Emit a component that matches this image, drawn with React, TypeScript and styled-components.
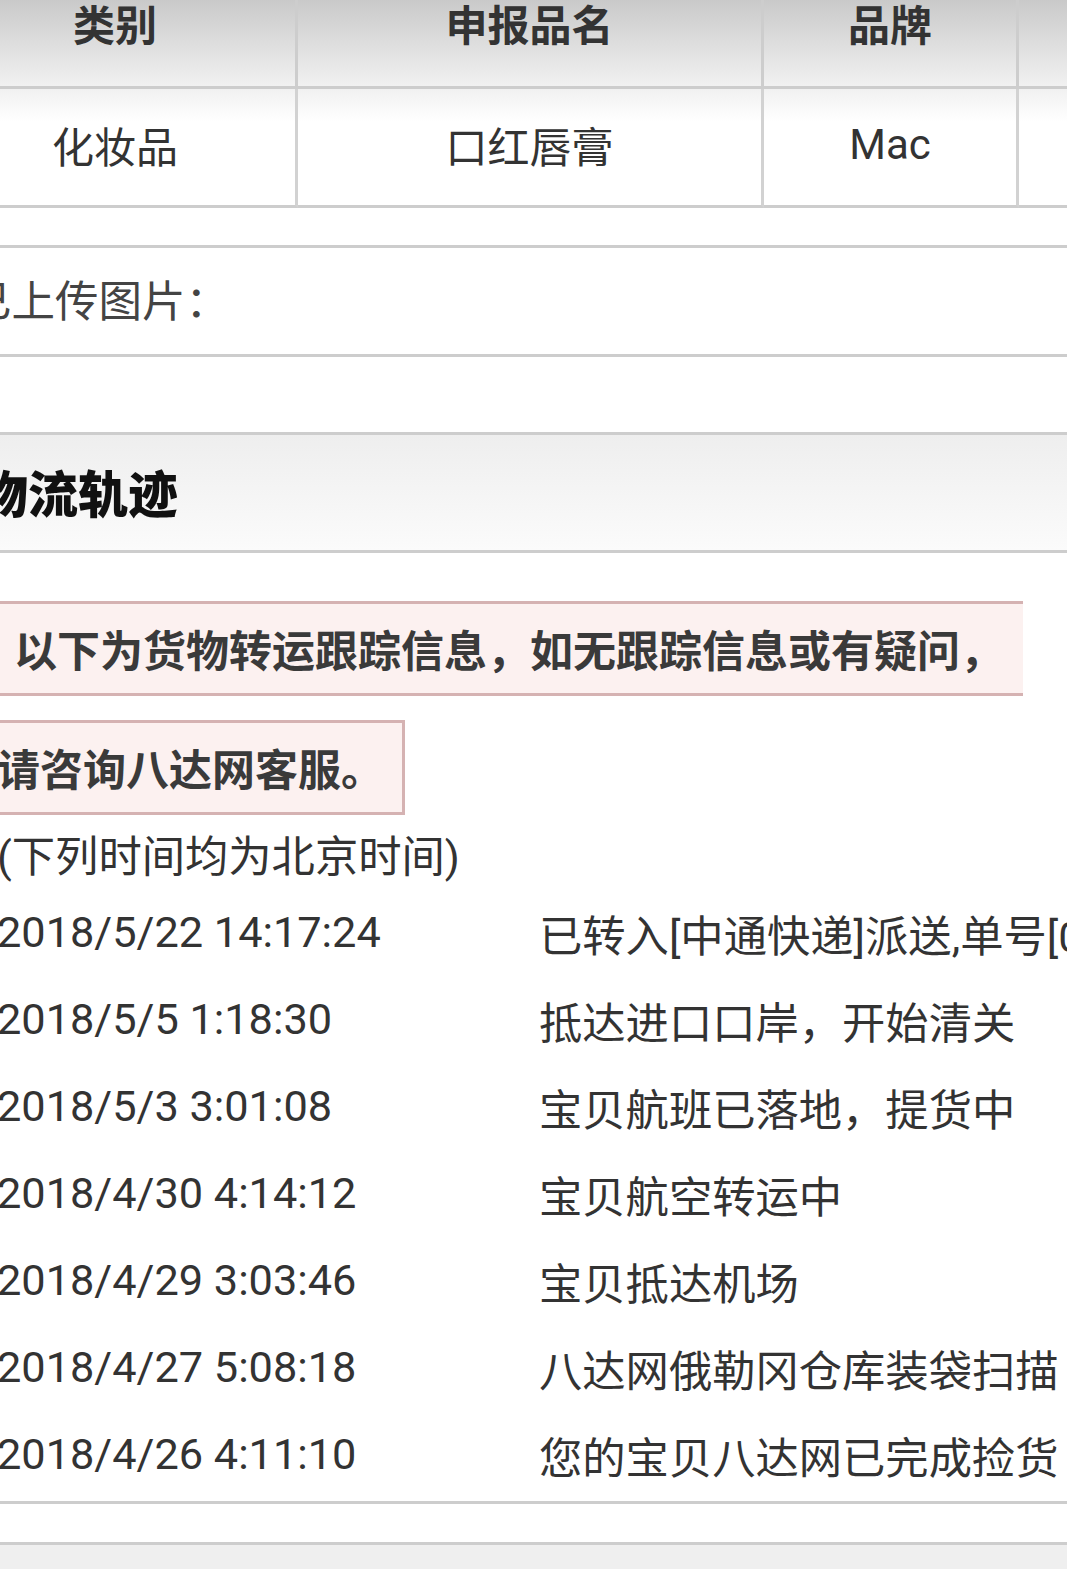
import React from "react";
import styled, { createGlobalStyle } from "styled-components";

const Global = createGlobalStyle`
  html, body { margin: 0; padding: 0; background: #fff; }
  body {
    overflow-x: hidden;
    font-family: Roboto, "Noto Sans CJK SC", sans-serif;
    color: #333;
  }
`;

const Page = styled.div`
  width: 1067px;
  overflow: hidden;
`;

const Canvas = styled.div`
  width: 1260px;
  margin-left: -65px;
  margin-top: -36px;
`;

const Table = styled.div`
  display: grid;
  grid-template-columns: 363px 466px 255px 1fr;
`;

const HeadCell = styled.div`
  height: 125px;
  box-sizing: border-box;
  padding-bottom: 5px;
  display: flex;
  align-items: center;
  justify-content: center;
  border-right: 3px solid #cdcdcd;
  border-bottom: 3px solid #cdcdcd;
  background: linear-gradient(#b9b9b9, #f1f1f1);
  font-family: "Noto Sans CJK SC", sans-serif;
  font-weight: 700;
  font-size: 42px;
  color: #333;
`;

const Cell = styled.div`
  height: 119px;
  box-sizing: border-box;
  padding-bottom: 5px;
  display: flex;
  align-items: center;
  justify-content: center;
  border-right: 3px solid #d2d2d2;
  border-bottom: 3px solid #cdcdcd;
  background: linear-gradient(#f1f1f1, #ffffff 28%);
  font-size: 42px;
  color: #333;
`;

const Panel = styled.div`
  margin-top: 37px;
  border-top: 3px solid #cdcdcd;
`;

const InfoRow = styled.div<{ $h: number }>`
  height: ${(p) => p.$h}px;
  box-sizing: border-box;
  padding: 0 0 5px 33px;
  display: flex;
  align-items: center;
  border-bottom: 3px solid #cdcdcd;
  font-family: "Noto Sans CJK SC", sans-serif;
  font-size: 43.5px;
  color: #444;
`;

const SectionTitle = styled.div`
  height: 118px;
  box-sizing: border-box;
  padding: 0 0 3px 43px;
  display: flex;
  align-items: center;
  border-bottom: 3px solid #cdcdcd;
  background: linear-gradient(#eeeeee, #fbfbfb);
  font-family: "Noto Sans CJK SC", sans-serif;
  font-weight: 900;
  font-size: 50px;
  color: #111;
`;

const Tracking = styled.div`
  padding: 36px 0 3px 62px;
  border-bottom: 3px solid #cdcdcd;
`;

const NoticePara = styled.div`
  line-height: 119px;
  font-family: "Noto Sans CJK SC", sans-serif;
  font-weight: 700;
  font-size: 43px;
  color: #3a3a3a;
`;

const Notice = styled.span`
  background: #fcf1f0;
  border: 3px solid #d5b2b2;
  padding: 13px 18px 14px 14px;
`;

const Note = styled.div`
  line-height: 62px;
  font-size: 43.3px;
  color: #333;
`;

const TrackRow = styled.div`
  display: grid;
  grid-template-columns: 542px 1fr;
  height: 87px;
  align-items: center;
  font-size: 43.3px;
  color: #333;
  white-space: nowrap;
`;

const Spacer = styled.div`
  height: 38px;
  border-bottom: 3px solid #cdcdcd;
`;

const Footer = styled.div`
  height: 40px;
  background: #efefef;
`;

const rows: [string, string][] = [
  ["2018/5/22 14:17:24", "已转入[中通快递]派送,单号[0"],
  ["2018/5/5 1:18:30", "抵达进口口岸，开始清关"],
  ["2018/5/3 3:01:08", "宝贝航班已落地，提货中"],
  ["2018/4/30 4:14:12", "宝贝航空转运中"],
  ["2018/4/29 3:03:46", "宝贝抵达机场"],
  ["2018/4/27 5:08:18", "八达网俄勒冈仓库装袋扫描"],
  ["2018/4/26 4:11:10", "您的宝贝八达网已完成捡货"],
];

export default function App() {
  return (
    <Page>
      <Global />
      <Canvas>
        <Table>
          <HeadCell>类别</HeadCell>
          <HeadCell>申报品名</HeadCell>
          <HeadCell>品牌</HeadCell>
          <HeadCell />
          <Cell>化妆品</Cell>
          <Cell>口红唇膏</Cell>
          <Cell>Mac</Cell>
          <Cell />
        </Table>
        <Panel>
          <InfoRow $h={109}>已上传图片：</InfoRow>
          <InfoRow $h={78} />
          <SectionTitle>物流轨迹</SectionTitle>
        </Panel>
        <Tracking>
          <NoticePara>
            <Notice>
              {"以下为货物转运跟踪信息，如无跟踪信息或有疑问，\u00a0\u00a0"}
              <br />
              请咨询八达网客服。
            </Notice>
          </NoticePara>
          <Note>(下列时间均为北京时间)</Note>
          {rows.map(([t, d]) => (
            <TrackRow key={t}>
              <span>{t}</span>
              <span>{d}</span>
            </TrackRow>
          ))}
        </Tracking>
        <Spacer />
        <Footer />
      </Canvas>
    </Page>
  );
}
